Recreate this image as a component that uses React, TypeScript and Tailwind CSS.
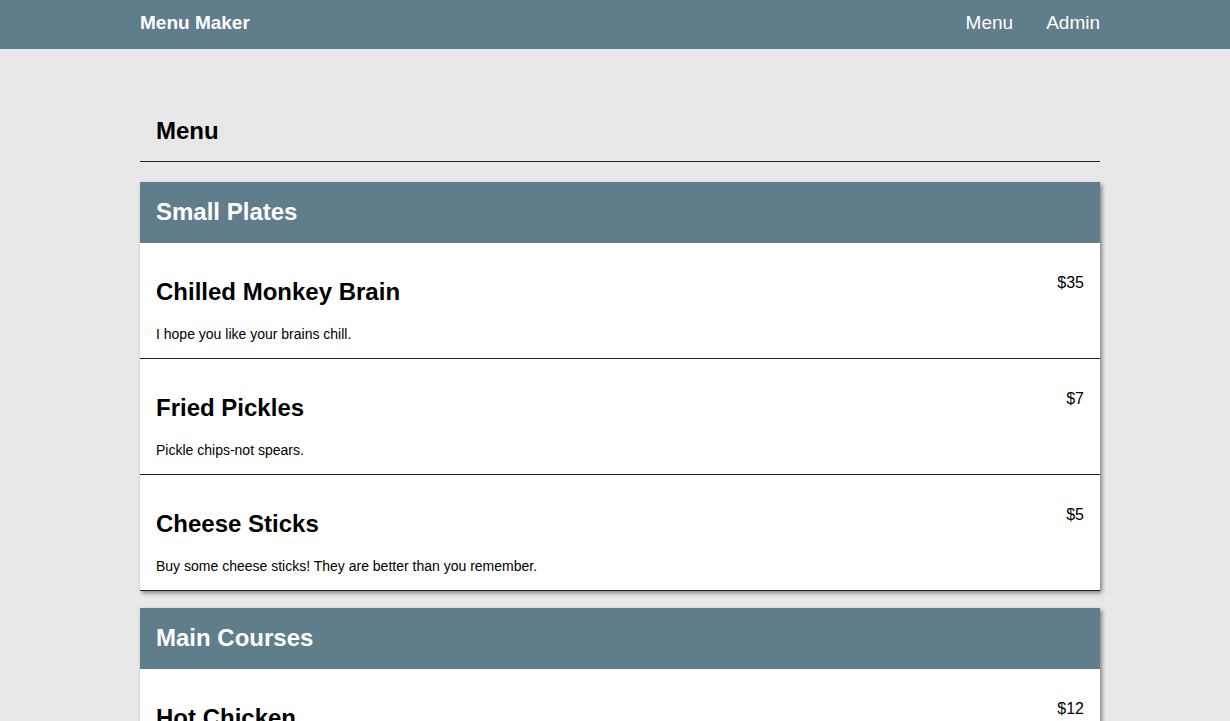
import React from "react";

type Item = { name: string; desc: string; price: string };
type Section = { title: string; items: Item[] };

const sections: Section[] = [
  {
    title: "Small Plates",
    items: [
      { name: "Chilled Monkey Brain", desc: "I hope you like your brains chill.", price: "$35" },
      { name: "Fried Pickles", desc: "Pickle chips-not spears.", price: "$7" },
      { name: "Cheese Sticks", desc: "Buy some cheese sticks! They are better than you remember.", price: "$5" },
    ],
  },
  {
    title: "Main Courses",
    items: [
      { name: "Hot Chicken", desc: "Nashville style hot chicken.", price: "$12" },
      { name: "Burger", desc: "A classic burger.", price: "$10" },
    ],
  },
];

export default function App() {
  return (
    <div
      className="min-h-screen bg-[#e8e8e8] text-black"
      style={{ fontFamily: '"Liberation Sans", Arial, sans-serif' }}
    >
      <header className="bg-[#607d8b] h-[49px]">
        <div className="w-[970px] pl-[10px] mx-auto h-full flex items-center justify-between text-white pb-[3px]">
          <span className="font-bold text-[19px] leading-[22px]">Menu Maker</span>
          <nav className="flex gap-[33px] text-[19px] leading-[22px]">
            <a>Menu</a>
            <a>Admin</a>
          </nav>
        </div>
      </header>
      <main className="w-[970px] pl-[10px] mx-auto pt-[68px]">
        <div className="border-b border-[#222] px-4 pb-4">
          <h1 className="font-bold text-2xl leading-7">Menu</h1>
        </div>
        <div className="pt-5 flex flex-col gap-[17px]">
          {sections.map((s) => (
            <section key={s.title} className="bg-white shadow-[2px_2px_4px_rgba(0,0,0,0.45)]">
              <div className="bg-[#607d8b] px-4 pt-4 pb-[17px]">
                <h2 className="text-white font-bold text-2xl leading-7">{s.title}</h2>
              </div>
              {s.items.map((it) => (
                <div
                  key={it.name}
                  className="flex items-start justify-between px-4 pt-[31px] pb-[16px] border-b border-[#222]"
                >
                  <div>
                    <h3 className="mt-[4px] font-bold text-2xl leading-7">{it.name}</h3>
                    <p className="mt-5 text-sm leading-4">{it.desc}</p>
                  </div>
                  <span className="text-base leading-[18px]">{it.price}</span>
                </div>
              ))}
            </section>
          ))}
        </div>
      </main>
    </div>
  );
}
